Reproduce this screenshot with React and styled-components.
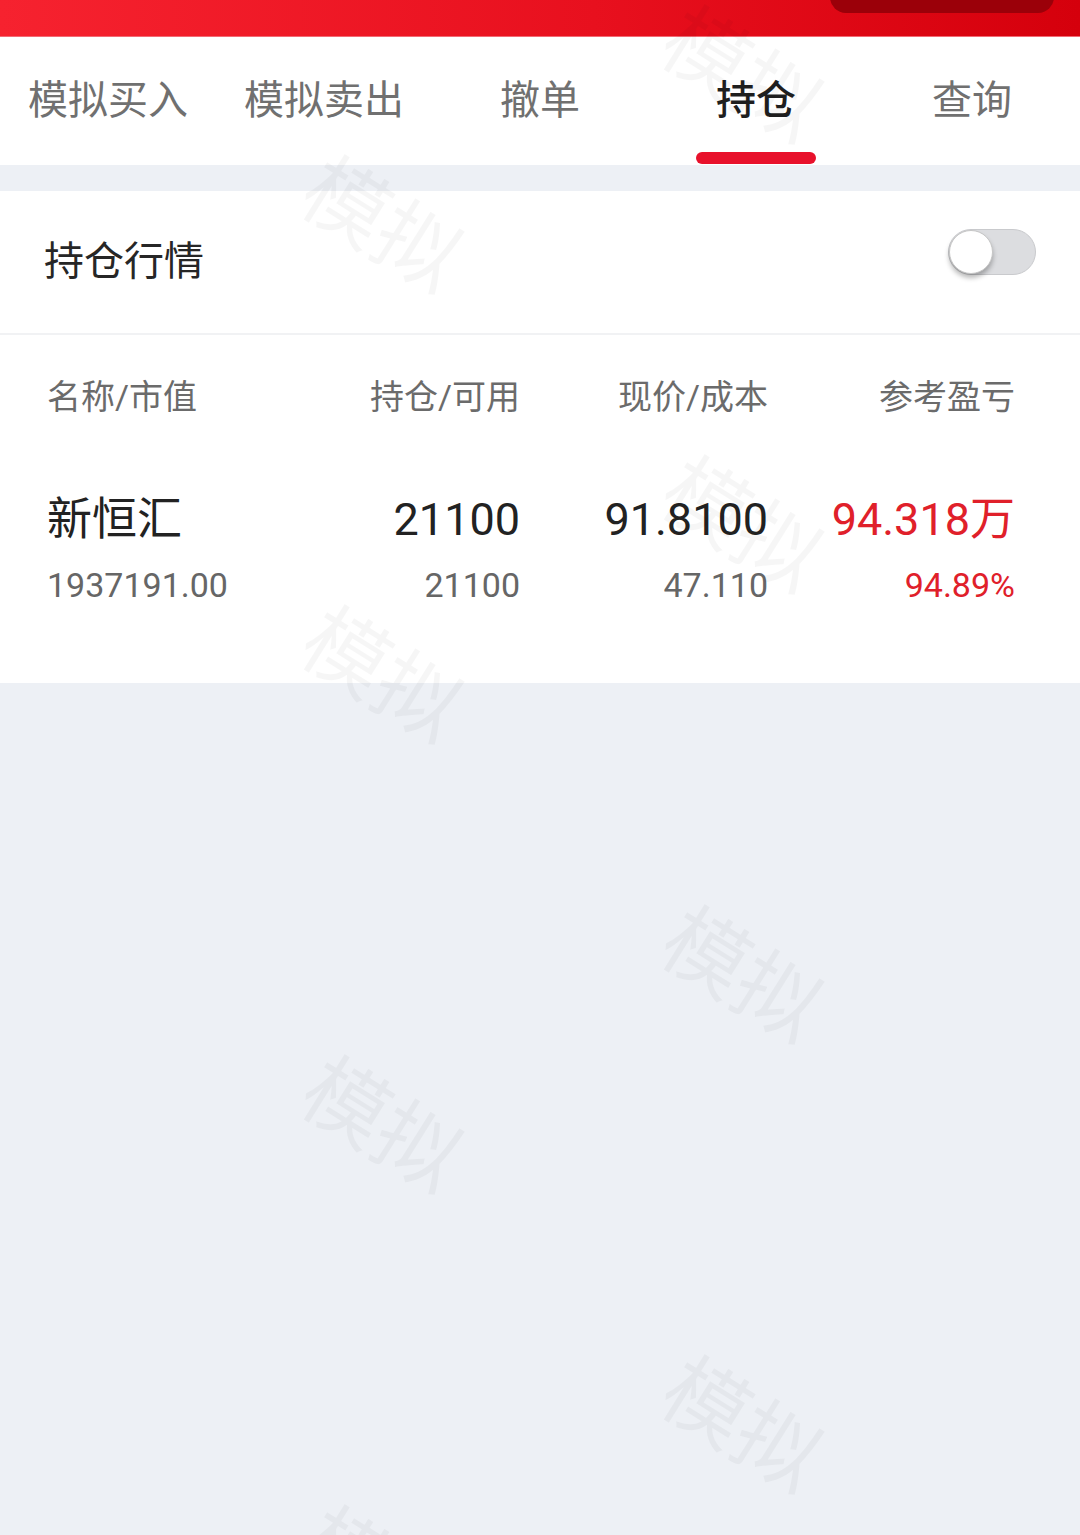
import styled, { createGlobalStyle } from 'styled-components';

const GlobalStyle = createGlobalStyle`
  html, body {
    margin: 0;
    padding: 0;
    background: #edf0f5;
  }

  body {
    font-family: Roboto, "Noto Sans CJK SC", sans-serif;
  }
`

const tabs = ["模拟买入", "模拟卖出", "撤单", "持仓", "查询"]

const marks = [
  { x: 385, y: 220 },
  { x: 745, y: 70 },
  { x: 745, y: 520 },
  { x: 385, y: 670 },
  { x: 745, y: 970 },
  { x: 385, y: 1120 },
  { x: 745, y: 1420 },
  { x: 385, y: 1570 },
]

const position = {
  name: "新恒汇",
  value: "1937191.00",
  hold: "21100",
  usable: "21100",
  price: "91.8100",
  cost: "47.110",
  profit: "94.318万",
  rate: "94.89%",
}

export default function App() {
  return (
    <Page>
      <GlobalStyle />

      <StatusBar>
        <Notch />
      </StatusBar>

      <TabBar>
        {tabs.map(tab => (
          <Tab key={tab} active={tab === "持仓"}>
            <span>{tab}</span>
            {tab === "持仓" && <Underline />}
          </Tab>
        ))}
      </TabBar>

      <Gap />

      <SwitchRow>
        <span>持仓行情</span>
        <Toggle>
          <Knob />
        </Toggle>
      </SwitchRow>

      <List>
        <HeadRow>
          <Cell>名称/市值</Cell>
          <Cell right>持仓/可用</Cell>
          <Cell right>现价/成本</Cell>
          <Cell right>参考盈亏</Cell>
        </HeadRow>

        <DataRow>
          <Cell>
            <Main>{position.name}</Main>
            <Sub>{position.value}</Sub>
          </Cell>
          <Cell right>
            <Main>{position.hold}</Main>
            <Sub>{position.usable}</Sub>
          </Cell>
          <Cell right>
            <Main>{position.price}</Main>
            <Sub>{position.cost}</Sub>
          </Cell>
          <Cell right>
            <Main red>{position.profit}</Main>
            <Sub red>{position.rate}</Sub>
          </Cell>
        </DataRow>
      </List>

      <Watermarks>
        {marks.map((m, i) => (
          <Mark key={i} style={{ left: m.x, top: m.y }}>模拟</Mark>
        ))}
      </Watermarks>
    </Page>
  )
}

const Page = styled.div`
  position: relative;
  display: flex;
  flex-direction: column;

  width: 1080px;
  min-height: 1535px;
  overflow: hidden;

  background: #edf0f5;
`

const StatusBar = styled.div`
  position: relative;
  flex-shrink: 0;

  height: 36px;
  border-bottom: 1px solid #f26a74;

  background: linear-gradient(90deg, #f6222f 0%, #e8101e 55%, #d5000c 100%);
`

const Notch = styled.div`
  position: absolute;
  top: -20px;
  right: 26px;

  width: 224px;
  height: 33px;
  border-radius: 16px;

  background: #9b0009;
`

const TabBar = styled.div`
  display: flex;

  height: 128px;

  background: #ffffff;
`

const Tab = styled.div`
  flex: 1;
  display: flex;
  flex-direction: column;
  align-items: center;

  span {
    margin-top: 42px;

    font-size: 40px;
    line-height: 44px;
    font-weight: ${p => (p.active ? 500 : 400)};
    color: ${p => (p.active ? "#1f1f1f" : "#707070")};
  }
`

const Underline = styled.div`
  margin-top: auto;
  margin-bottom: 1px;

  width: 120px;
  height: 12px;
  border-radius: 6px;

  background: #e8112b;
`

const Gap = styled.div`
  height: 26px;
`

const SwitchRow = styled.div`
  display: flex;
  justify-content: space-between;
  align-items: center;

  height: 142px;
  padding: 0 44px;
  border-bottom: 2px solid #f1f2f4;

  background: #ffffff;

  span {
    font-size: 40px;
    line-height: 44px;
    color: #262626;
  }
`

const Toggle = styled.div`
  display: flex;
  align-items: center;

  width: 86px;
  height: 44px;
  margin-bottom: 20px;
  border: 1px solid #c9cacd;
  border-radius: 23px;

  background: #dcdde0;
`

const Knob = styled.div`
  width: 42px;
  height: 42px;
  margin-left: 0;
  border: 1px solid #c6c6c6;
  border-radius: 50%;

  background: #ffffff;
  box-shadow: 0 4px 5px rgba(0, 0, 0, 0.28);
`

const List = styled.div`
  display: flex;
  flex-direction: column;

  background: #ffffff;
`

const HeadRow = styled.div`
  display: grid;
  grid-template-columns: 225px 248px 248px 1fr;
  align-items: center;

  height: 124px;
  padding: 0 65px 0 47px;

  font-size: 34px;
  line-height: 40px;
  color: #6b6b6b;
`

const DataRow = styled.div`
  display: grid;
  grid-template-columns: 225px 248px 248px 1fr;

  padding: 34px 65px 78px 47px;
`

const Cell = styled.div`
  display: flex;
  flex-direction: column;
  align-items: ${p => (p.right ? "flex-end" : "flex-start")};

  white-space: nowrap;
`

const Main = styled.div`
  font-size: 45px;
  line-height: 54px;
  color: ${p => (p.red ? "#e0202a" : "#222222")};
`

const Sub = styled.div`
  margin-top: 18px;

  font-size: 34px;
  line-height: 40px;
  color: ${p => (p.red ? "#e0202a" : "#666666")};
`

const Watermarks = styled.div`
  position: absolute;
  inset: 0;

  pointer-events: none;
`

const Mark = styled.div`
  position: absolute;

  transform: translate(-50%, -50%) rotate(32deg);

  font-family: "Noto Sans CJK SC", sans-serif;
  font-size: 84px;
  line-height: 84px;
  color: rgba(0, 0, 0, 0.035);
  white-space: nowrap;
`
